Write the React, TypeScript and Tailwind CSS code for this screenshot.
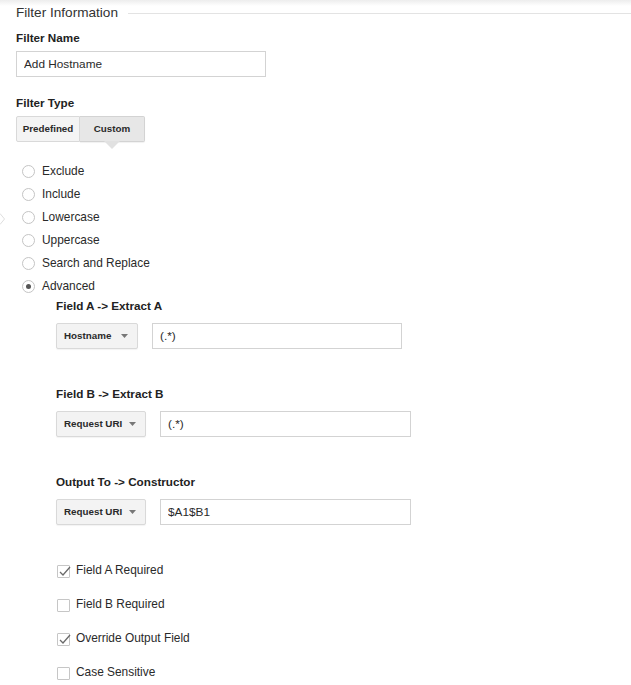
import { useState } from "react";

type Option = { label: string };

const filterTypes: Option[] = [
  { label: "Exclude" },
  { label: "Include" },
  { label: "Lowercase" },
  { label: "Uppercase" },
  { label: "Search and Replace" },
  { label: "Advanced" },
];

const checks = [
  { label: "Field A Required", checked: true },
  { label: "Field B Required", checked: false },
  { label: "Override Output Field", checked: true },
  { label: "Case Sensitive", checked: false },
];

const SelectButton = ({ label, width }: { label: string; width: string }) => (
  <button
    className={`${width} h-[26px] flex items-center justify-between pl-[7px] pr-[9px] border border-[#d9d9d9] rounded-[2px] bg-[#f3f3f3] text-[9.8px] font-bold text-[#2a2a2a] shadow-[0_1px_1px_rgba(0,0,0,0.05)]`}
  >
    <span>{label}</span>
    <svg width="7" height="4" viewBox="0 0 7 4">
      <polygon points="0,0 7,0 3.5,4" fill="#777" />
    </svg>
  </button>
);

const TextInput = ({ value, width }: { value: string; width: string }) => (
  <input
    readOnly
    value={value}
    className={`${width} h-[26px] border border-[#d3d3d3] pl-[7px] text-[11.8px] text-[#2a2a2a] outline-none`}
  />
);

const FieldBlock = ({
  title,
  select,
  selectWidth,
  inputWidth,
  value,
  className,
}: {
  title: string;
  select: string;
  selectWidth: string;
  inputWidth: string;
  value: string;
  className: string;
}) => (
  <div className={className}>
    <div className="h-[16px] leading-[16px] text-[11.7px] font-bold text-[#222]">{title}</div>
    <div className="mt-[9px] flex items-center gap-[14px]">
      <SelectButton label={select} width={selectWidth} />
      <TextInput value={value} width={inputWidth} />
    </div>
  </div>
);

const App = () => {
  const [type, setType] = useState("Advanced");

  return (
    <div className="relative w-[631px] h-[685px] overflow-hidden bg-white text-[#2a2a2a] font-['Liberation_Sans',Arial,sans-serif]">
      <div className="absolute top-0 inset-x-0 h-[6px] bg-gradient-to-b from-[#ededed] to-white" />
      <svg className="absolute left-0 top-[213px]" width="6" height="12" viewBox="0 0 6 12">
        <polyline points="0,0.5 4.5,6 0,11.5" fill="none" stroke="#dedede" strokeWidth="1" />
      </svg>

      <div className="pl-4">
        <div className="flex items-center h-[24px] pt-[2px]">
          <span className="text-[13.6px] text-[#333]">Filter Information</span>
          <div className="flex-1 h-px bg-[#e3e3e3] ml-[10px]" />
        </div>

        <div className="mt-[6px] h-[16px] leading-[16px] text-[11.7px] font-bold text-[#222]">Filter Name</div>
        <div className="mt-[5px]">
          <TextInput value="Add Hostname" width="w-[250px]" />
        </div>

        <div className="mt-[18px] h-[16px] leading-[16px] text-[11.7px] font-bold text-[#222]">Filter Type</div>
        <div className="mt-[5px] flex h-[26px] w-[129px]">
          <button className="w-[64px] h-full border border-[#d9d9d9] rounded-l-[2px] bg-[#f4f4f4] text-[9.8px] font-bold text-[#2a2a2a]">
            Predefined
          </button>
          <button className="relative w-[65px] h-full border border-l-0 border-[#d3d3d3] rounded-r-[2px] bg-[#e7e7e7] text-[9.8px] font-bold text-[#2a2a2a] shadow-[0_1px_1px_rgba(0,0,0,0.06)]">
            Custom
            <svg className="absolute left-[24px] -bottom-[8px]" width="16" height="8" viewBox="0 0 16 8">
              <polygon points="0,0 16,0 8,8" fill="#e1e1e1" />
            </svg>
          </button>
        </div>

        <div className="mt-[18px]">
          {filterTypes.map((opt) => (
            <label key={opt.label} className="flex items-center h-[23px] cursor-pointer" onClick={() => setType(opt.label)}>
              <span className="ml-[6px] w-[13px] h-[13px] rounded-full border border-[#c4c4c4] flex items-center justify-center">
                {type === opt.label && <span className="w-[5px] h-[5px] rounded-full bg-[#555]" />}
              </span>
              <span className="ml-[7px] text-[11.9px] text-[#2a2a2a]">{opt.label}</span>
            </label>
          ))}
        </div>

        <div className="pl-[40px]">
          <FieldBlock
            className="mt-0"
            title="Field A -> Extract A"
            select="Hostname"
            selectWidth="w-[82px]"
            inputWidth="w-[250px]"
            value="(.*)"
          />
          <FieldBlock
            className="mt-[37px]"
            title="Field B -> Extract B"
            select="Request URI"
            selectWidth="w-[90px]"
            inputWidth="w-[251px]"
            value="(.*)"
          />
          <FieldBlock
            className="mt-[37px]"
            title="Output To -> Constructor"
            select="Request URI"
            selectWidth="w-[90px]"
            inputWidth="w-[251px]"
            value="$A1$B1"
          />

          <div className="mt-[29px]">
            {checks.map((c) => (
              <div key={c.label} className="flex items-center h-[34px]">
                <span className="relative ml-[1px] w-[13px] h-[13px] border border-[#c6c6c6] rounded-[1px] bg-white">
                  {c.checked && (
                    <svg className="absolute -left-[1px] -top-[2px]" width="15" height="15" viewBox="0 0 15 15">
                      <polyline points="3,8 6,11 13,3" fill="none" stroke="#6a6a6a" strokeWidth="1.3" />
                    </svg>
                  )}
                </span>
                <span className="ml-[6px] text-[11.9px] text-[#2a2a2a]">{c.label}</span>
              </div>
            ))}
          </div>
        </div>
      </div>
    </div>
  );
};

export default App;
